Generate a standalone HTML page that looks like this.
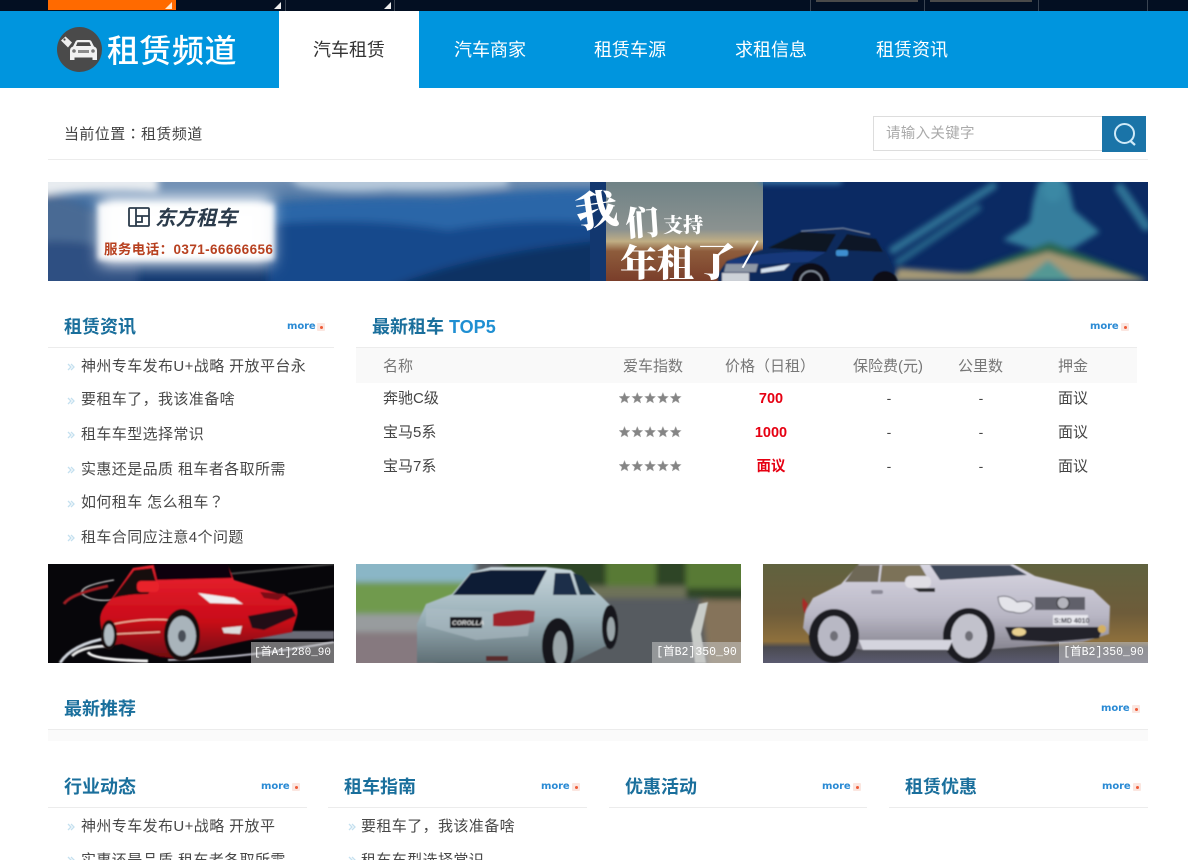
<!DOCTYPE html>
<html lang="zh-CN">
<head>
<meta charset="utf-8">
<title>租赁频道</title>
<style>
*{margin:0;padding:0;box-sizing:border-box}
html,body{width:1188px;height:860px;overflow:hidden;background:#fff}
body{position:relative;font-family:"Liberation Sans","Noto Sans CJK SC",sans-serif;color:#444}
.a{position:absolute;white-space:nowrap}
.t{position:absolute;white-space:nowrap;line-height:20px;height:20px}
.nav{position:absolute;top:12px;height:77px;width:140px;line-height:77px;text-align:center;font-size:18px;color:#fff}
.h{position:absolute;white-space:nowrap;font-size:18px;font-weight:700;color:#1a6f9c;line-height:26px;height:26px}
.ln{position:absolute;height:1px;background:#ececec}
.li{position:absolute;white-space:nowrap;font-size:15px;line-height:20px;height:20px;color:#484848;letter-spacing:.4px}
.tc{font-family:"Noto Sans CJK TC",sans-serif;line-height:0}
.bu{position:absolute;width:8px;height:8px}
.more{position:absolute;width:39px;height:10px}
.more b{position:absolute;left:0;top:-2px;font:700 10px/14px "DejaVu Sans",sans-serif;color:#2a8ad4;letter-spacing:-.1px}
.more i{position:absolute;right:0;top:1px;width:8px;height:8px;background:#fbe6e0;border-radius:1px}
.more i:after{content:"";position:absolute;left:3px;top:3px;width:3px;height:3px;background:#ee5a36;border-radius:50%}
.th{position:absolute;top:357px;font-size:15px;line-height:20px;color:#777;white-space:nowrap}
.td{position:absolute;font-size:15px;line-height:20px;color:#444;white-space:nowrap}
.pr{position:absolute;width:80px;text-align:center;left:731px;font-size:14.5px;font-weight:700;line-height:20px;color:#e60012}
.c{position:absolute;width:40px;text-align:center;font-size:14px;line-height:20px;color:#444}
.pic{position:absolute;top:564px;height:99px;overflow:hidden}
.pic svg{display:block}
.tag{position:absolute;right:0;bottom:0;height:21px;background:rgba(200,200,200,.55);color:#fff;font:11px/22px "Liberation Mono","Noto Sans CJK SC",monospace;text-align:center;white-space:nowrap}
</style>
</head>
<body>
<div class="a" style="left:0;top:0;width:1188px;height:11px;background:#030f22"></div>
<div class="a" style="left:48px;top:0;width:128px;height:10px;background:#ff6a00"></div>
<svg class="a" style="left:0;top:0" width="1188" height="11">
<path d="M165 9 172 9 172 2Z" fill="#fde7d0"/><path d="M274 9 281 9 281 2Z" fill="#eee"/><path d="M384 9 391 9 391 2Z" fill="#eee"/>
<g fill="#3a4452"><rect x="285" y="0" width="1" height="11"/><rect x="394" y="0" width="1" height="11"/><rect x="810" y="0" width="1" height="11"/><rect x="924" y="0" width="1" height="11"/><rect x="1038" y="0" width="1" height="11"/><rect x="1147" y="0" width="1" height="11"/></g>
<rect x="816" y="0" width="102" height="2" fill="#4a4a4a"/><rect x="930" y="0" width="102" height="2" fill="#4a4a4a"/>
</svg>
<div class="a" style="left:0;top:11px;width:1188px;height:77px;background:#0095de"></div>
<svg class="a" style="left:56px;top:26px" width="48" height="48" viewBox="0 0 48 48">
<circle cx="23.500" cy="23.500" r="22.500" fill="#4a4a4a"/>
<path d="M17 20.500 19.500 15.500Q20.300 14 22 14H33Q34.700 14 35.500 15.500L38 20.500Q41 21.500 41 24.500V34H36.500V31.500H18.500V34H14V24.500Q14 21.500 17 20.500Z" fill="#f2f2f2"/>
<path d="M20 20 21.500 16.200H33.500L35 20Z" fill="#4a4a4a"/>
<rect x="22" y="24" width="11" height="3" fill="#8c8c8c"/><circle cx="18" cy="25" r="1.800" fill="#777"/><circle cx="37" cy="25" r="1.800" fill="#777"/>
<path d="M5 14.500 9.500 10.500 16 16.500 12 21.500Z" fill="#eee"/><circle cx="8.500" cy="13.500" r="1.100" fill="#4a4a4a"/>
</svg>
<div class="a" style="left:107px;top:27px;font-size:32px;line-height:48px;color:#fff;letter-spacing:.5px;font-weight:500">租赁频道</div>
<div class="a" style="left:279px;top:11px;width:140px;height:77px;background:#fff"></div>
<div class="nav" style="left:279px;color:#333">汽车租赁</div>
<div class="nav" style="left:420px">汽车商家</div>
<div class="nav" style="left:560px">租赁车源</div>
<div class="nav" style="left:701px">求租信息</div>
<div class="nav" style="left:842px">租赁资讯</div>

<div class="t" style="left:64px;top:125px;font-size:15px;color:#444;letter-spacing:.4px">当前位置<span class="tc" lang="zh-Hant">：</span>租赁频道</div>
<div class="ln" style="left:48px;top:159px;width:1100px"></div>
<div class="a" style="left:873px;top:116px;width:230px;height:35px;border:1px solid #ddd;background:#fff"></div>
<div class="t" style="left:886px;top:124px;font-size:14.500px;color:#aaa;letter-spacing:.3px">请输入关键字</div>
<div class="a" style="left:1102px;top:116px;width:44px;height:36px;background:#1a74a8"></div>
<svg class="a" style="left:1102px;top:116px" width="44" height="36"><circle cx="22.500" cy="17.500" r="9.500" fill="none" stroke="#cfeaf8" stroke-width="2"/><path d="M28 24.500 33 29" stroke="#cfeaf8" stroke-width="2.200" fill="none"/></svg>

<!-- banner -->
<svg class="a" style="left:48px;top:182px" width="1100" height="99" viewBox="0 0 1100 99">
<defs>
<linearGradient id="sky" x1="0" y1="0" x2="0" y2="1"><stop offset="0" stop-color="#6f8eb2"/><stop offset=".3" stop-color="#2e6099"/><stop offset="1" stop-color="#12386f"/></linearGradient>
<linearGradient id="ph" x1="0" y1="0" x2="0" y2="1"><stop offset="0" stop-color="#6f8286"/><stop offset=".48" stop-color="#8b9290"/><stop offset=".6" stop-color="#c0ae84"/><stop offset=".7" stop-color="#8e5c3c"/><stop offset="1" stop-color="#7a3e2a"/></linearGradient>
<filter id="b2" x="-20%" y="-40%" width="140%" height="180%"><feGaussianBlur stdDeviation="4"/></filter>
<filter id="b3" x="-20%" y="-40%" width="140%" height="180%"><feGaussianBlur stdDeviation="3"/></filter>
<filter id="b5" x="-40%" y="-60%" width="180%" height="220%"><feGaussianBlur stdDeviation="8"/></filter>
<filter id="b1"><feGaussianBlur stdDeviation=".7"/></filter>
<clipPath id="bc"><rect width="1100" height="99"/></clipPath>
</defs>
<g clip-path="url(#bc)">
<rect width="558" height="99" fill="url(#sky)"/>
<g filter="url(#b2)">
<path d="M240 -8H460V4Q400 10 340 8 290 12 250 4Z" fill="#b6c8da"/>
<path d="M200 24Q320 14 400 18 480 6 558 8V60H200Z" fill="#2a66a8"/>
<path d="M220 42Q320 34 400 48 480 34 558 42V110H220Z" fill="#174a8c"/>
<path d="M330 110Q420 70 558 58V110Z" fill="#0f3164"/>
<path d="M-10 10Q20 16 50 30V70H-10Z" fill="#4a6a94"/>
<path d="M-10 60Q50 55 90 80V110H-10Z" fill="#2f5082"/>
<path d="M-10 -8H110V10Q50 6 -10 14Z" fill="#e8ecf0"/>
</g>
<rect x="52" y="14" width="172" height="68" fill="#fff" filter="url(#b5)"/>
<rect x="50" y="22" width="176" height="56" fill="#fff" filter="url(#b3)" opacity=".92"/>
<g fill="none" stroke="#2b3b4b" stroke-width="1.800"><rect x="81" y="26" width="20" height="18" rx="1"/><path d="M88 26V44M88 34H101M94 34V40H88"/></g>
<text x="107" y="43" font-family="'Liberation Sans','Noto Sans CJK SC',sans-serif" font-size="20.500" font-weight="700" font-style="italic" fill="#2b3b4b">东方租车</text>
<text x="56" y="72" font-family="'Liberation Sans','Noto Sans CJK SC',sans-serif" font-size="13.500" font-weight="700" fill="#b7401f" letter-spacing=".4">服务电话：0371-66666656</text>
<rect x="542" width="16" height="99" fill="#12376f"/>
<rect x="558" width="157" height="99" fill="url(#ph)"/>
<rect x="715" width="385" height="99" fill="#0b2a63"/>
<g fill="none" stroke-linecap="round" filter="url(#b3)" opacity=".85">
<path d="M715 -2H790" stroke="#3c7cab" stroke-width="9"/>
<path d="M845 68 945 4" stroke="#357e9e" stroke-width="8"/>
<path d="M850 80 930 26" stroke="#2a6e90" stroke-width="7"/>
<path d="M1005 2V10" stroke="#4a9bb4" stroke-width="20"/>
<path d="M1072 6 1098 44" stroke="#357f9e" stroke-width="10"/>
</g>
<g filter="url(#b3)" opacity=".9">
<path d="M990 0H1020L1026 28 1052 50 1026 66 980 66 955 58 982 40 985 20Z" fill="#3a88a4"/>
<path d="M855 99V94L921 90 1002 60 1096 96V99Z" fill="#2f6f50"/>
<path d="M845 99 850 86 925 92 1000 70 1100 99Z" fill="#b7a678"/>
<path d="M1000 78 1026 99H974Z" fill="#5da59a"/>
</g>
<!-- suv -->
<g filter="url(#b1)">
<path d="M670 110V92L679 79 720 66 753 50 792 47 822 52 838 70 846 88V110Z" fill="#0f2a5c"/>
<path d="M720 66 753 50 788 52 778 70Z" fill="#0a1220"/>
<path d="M788 68 799 52 828 57 835 70Z" fill="#101828"/>
<path d="M753 49 795 46 822 52" fill="none" stroke="#8a95a5" stroke-width="1"/>
<path d="M679 79Q720 68 778 70L760 80 680 84Z" fill="#16387a"/>
<path d="M678 82H710L708 90 676 90Z" fill="#8e98a6"/>
<path d="M713 87 742 82 736 88 713 91Z" fill="#d6e2ee"/>
<rect x="674" y="91" width="27" height="9" fill="#cdd2d8"/>
<rect x="788" y="68" width="12" height="6" rx="2" fill="#3c8ed0"/>
<circle cx="763" cy="100" r="19" fill="#070d18"/><circle cx="763" cy="100" r="11" fill="none" stroke="#8e98a6" stroke-width="1.500"/>
<circle cx="837" cy="102" r="13" fill="#070d18"/>
</g>
<g font-family="'Noto Serif CJK SC','Noto Sans CJK SC',serif" fill="#fff" font-weight="900">
<text transform="translate(530,46) rotate(-8)" font-size="42">我</text>
<text transform="translate(578,54) rotate(-4)" font-size="34">们</text>
<text x="615" y="50" font-size="20">支持</text>
<text x="572" y="94" font-size="37">年租</text>
<text x="648" y="94" font-size="40">了</text>
<text x="694" y="80" font-size="30" transform="rotate(12 694 80)">/</text>
</g>
</g>
</svg>

<!-- left news -->
<div class="h" style="left:64px;top:314px">租赁资讯</div>
<div class="more" style="left:287px;top:322px;width:38px"><b>more</b><i></i></div>
<div class="ln" style="left:48px;top:347px;width:286px"></div>
<svg width="0" height="0" style="position:absolute"><defs><symbol id="bu" viewBox="0 0 8 8"><path d="M1 1 4 4 1 7M4 1 7 4 4 7" stroke="#c4e0ef" stroke-width="1.300" fill="none"/></symbol>
<symbol id="st" viewBox="0 0 64 12"><g id="s5"><path id="s1" d="M5.500 .5 7 4.200 11 4.500 8 7.100 9 11 5.500 8.900 2 11 3 7.100 0 4.500 4 4.200Z" fill="#858585" stroke="#b4b4b4" stroke-width=".5"/><use href="#s1" x="12.800"/><use href="#s1" x="25.600"/><use href="#s1" x="38.400"/><use href="#s1" x="51.200"/></g></symbol></defs></svg>
<svg class="bu" style="left:67px;top:363px"><use href="#bu"/></svg>
<svg class="bu" style="left:67px;top:397px"><use href="#bu"/></svg>
<svg class="bu" style="left:67px;top:431px"><use href="#bu"/></svg>
<svg class="bu" style="left:67px;top:466px"><use href="#bu"/></svg>
<svg class="bu" style="left:67px;top:500px"><use href="#bu"/></svg>
<svg class="bu" style="left:67px;top:534px"><use href="#bu"/></svg>
<div class="li" style="left:81px;top:357px">神州专车发布U+战略 开放平台永</div>
<div class="li" style="left:81px;top:390px">要租车了，我该准备啥</div>
<div class="li" style="left:81px;top:425px">租车车型选择常识</div>
<div class="li" style="left:81px;top:460px">实惠还是品质 租车者各取所需</div>
<div class="li" style="left:81px;top:493px">如何租车 怎么租车<span class="tc" lang="zh-Hant">？</span></div>
<div class="li" style="left:81px;top:528px">租车合同应注意4个问题</div>

<!-- table -->
<div class="h" style="left:372px;top:314px">最新租车 <span style="color:#1f8fd2">TOP5</span></div>
<div class="more" style="left:1090px;top:322px"><b>more</b><i></i></div>
<div class="ln" style="left:356px;top:347px;width:781px"></div>
<div class="a" style="left:356px;top:348px;width:781px;height:35px;background:#f9f9f9"></div>
<div class="th" style="left:383px">名称</div>
<div class="th" style="left:623px">爱车指数</div>
<div class="th" style="left:725px">价格（日租）</div>
<div class="th" style="left:853px">保险费(元)</div>
<div class="th" style="left:958px">公里数</div>
<div class="th" style="left:1058px">押金</div>
<div class="td" style="left:383px;top:389px">奔驰C级</div>
<div class="td" style="left:383px;top:423px">宝马5系</div>
<div class="td" style="left:383px;top:457px">宝马7系</div>
<svg class="a" style="left:619px;top:392px" width="64" height="12"><use href="#st"/></svg>
<svg class="a" style="left:619px;top:426px" width="64" height="12"><use href="#st"/></svg>
<svg class="a" style="left:619px;top:460px" width="64" height="12"><use href="#st"/></svg>
<div class="pr" style="top:389px">700</div>
<div class="pr" style="top:423px">1000</div>
<div class="pr" style="top:457px">面议</div>
<div class="c" style="left:869px;top:388px">-</div><div class="c" style="left:961px;top:388px">-</div>
<div class="c" style="left:869px;top:422px">-</div><div class="c" style="left:961px;top:422px">-</div>
<div class="c" style="left:869px;top:456px">-</div><div class="c" style="left:961px;top:456px">-</div>
<div class="td" style="left:1058px;top:389px">面议</div>
<div class="td" style="left:1058px;top:423px">面议</div>
<div class="td" style="left:1058px;top:457px">面议</div>

<!-- pictures -->
<div class="pic" style="left:48px;width:286px">
<svg width="286" height="99" viewBox="0 0 286 99">
<defs>
<linearGradient id="rb" x1="0" y1="0" x2="0" y2="1"><stop offset="0" stop-color="#ec2430"/><stop offset=".6" stop-color="#c80a18"/><stop offset="1" stop-color="#6c0610"/></linearGradient>
<filter id="p1"><feGaussianBlur stdDeviation=".7"/></filter>
</defs>
<rect width="286" height="99" fill="#07060a"/>
<g fill="none" filter="url(#p1)">
<path d="M66 16Q30 22 34 30 44 38 64 36" stroke="#c8c8c8" stroke-width="1.300"/>
<path d="M60 22Q22 30 16 40" stroke="#a01c24" stroke-width="3"/>
<path d="M180 10 286 0" stroke="#444" stroke-width="2"/>
<path d="M240 30 286 22" stroke="#333" stroke-width="2"/>
<path d="M12 99Q24 80 60 74" stroke="#cfd4dc" stroke-width="3"/>
<path d="M24 92Q34 82 62 82" stroke="#e6e6e6" stroke-width="3"/>
<path d="M40 88Q44 96 100 97" stroke="#f4f4f4" stroke-width="3"/>
<path d="M120 96Q200 94 286 78" stroke="#b8b8c4" stroke-width="2"/>
<path d="M205 71H286" stroke="#6a6a76" stroke-width="8"/>
</g>
<g filter="url(#p1)">
<path d="M52 55Q52 45 64 34L85 4 105 1H180L186 16 238 32Q252 40 249 52L244 68Q200 76 175 82L130 95 112 93 74 80 62 82Q52 70 52 55Z" fill="url(#rb)"/>
<path d="M65 34 86 6 104 4 108 18 100 30Q80 30 65 34Z" fill="#15080c"/>
<path d="M105 0H180L184 14 109 16Z" fill="#07060a"/>
<rect x="89" y="17" width="22" height="11" rx="4" fill="#e8202a"/>
<path d="M150 29 186 34 195 40 162 39Z" fill="#f0eef0"/>
<path d="M212 28 238 30 230 36 216 34Z" fill="#7a0a12"/>
<path d="M200 52 244 44 248 52 216 66 204 64Z" fill="#241016"/>
<path d="M174 64 194 62 192 70 176 69Z" fill="#dcdcdc"/>
<path d="M66 60Q96 54 122 56M68 70 112 68" stroke="#f2c0a8" stroke-width="1.200" fill="none"/>
<ellipse cx="134" cy="71" rx="18" ry="26" fill="#150a0c"/>
<ellipse cx="134" cy="72" rx="14" ry="20" fill="#a9b4bb"/>
<ellipse cx="134" cy="72" rx="4" ry="6" fill="#4a5058"/>
<ellipse cx="61" cy="71" rx="8" ry="15" fill="#150a0c"/>
<ellipse cx="61" cy="71" rx="5" ry="11" fill="#b0bac0"/>
</g>
</svg>
<div class="tag" style="width:83px">[首A1]280_90</div>
</div>

<div class="pic" style="left:356px;width:385px">
<svg width="385" height="99" viewBox="0 0 385 99">
<defs>
<linearGradient id="sb" x1="0" y1="0" x2="0" y2="1"><stop offset="0" stop-color="#c8d6dc"/><stop offset=".5" stop-color="#9cb2ba"/><stop offset="1" stop-color="#5e6e74"/></linearGradient>
<filter id="p2" x="-20%" y="-40%" width="140%" height="180%"><feGaussianBlur stdDeviation="3"/></filter>
<filter id="p3"><feGaussianBlur stdDeviation=".7"/></filter>
</defs>
<rect width="385" height="99" fill="#565b60"/>
<g filter="url(#p2)">
<rect x="-10" y="-10" width="130" height="30" fill="#8ab6c6"/>
<rect x="-10" y="18" width="130" height="32" fill="#6f9a4e"/>
<rect x="-10" y="50" width="90" height="20" fill="#989c9e"/>
<rect x="-10" y="68" width="90" height="40" fill="#86797f"/>
<path d="M140 -10H395V40L340 34 240 34 170 30Z" fill="#2e4526"/>
<path d="M250 -5H300V22H250ZM330 -5H395V24H330Z" fill="#587a36"/>
<path d="M230 22H330V34H230Z" fill="#6e7258"/>
<path d="M345 36H395V105H352Z" fill="#85735a"/>
</g>
<path d="M343 40 352 38 345 70 350 99H339L335 66Z" fill="#c8ccc8" filter="url(#p3)"/>
<g filter="url(#p3)">
<path d="M61 60 70 40 96 30 115 8 135 3H190L215 6 245 32 258 45 262 65 250 82 215 99H61Z" fill="url(#sb)"/>
<path d="M97 31 115 9 135 6H191L178 31Z" fill="#0a1a36"/>
<path d="M199 9 214 9 221 31 197 31Z" fill="#1a2e48"/><path d="M217 9 226 12 240 31 224 31Z" fill="#1c3044"/>
<path d="M70 44 175 50 172 72 120 76 70 62Z" fill="#adbdc4" opacity=".6"/>
<rect x="94" y="53" width="32" height="11" fill="#14181c"/>
<text x="96" y="61" font-size="6.500" font-weight="700" fill="#ddd" font-style="italic" font-family="Liberation Sans,sans-serif">COROLLA</text>
<path d="M137 50Q160 44 179 47L178 58Q160 64 137 62Z" fill="#a0202c"/>
<ellipse cx="202" cy="82" rx="16" ry="28" fill="#15181c"/><ellipse cx="204" cy="84" rx="7" ry="17" fill="#99a4a8"/>
<ellipse cx="254" cy="63" rx="8" ry="22" fill="#15181c"/><ellipse cx="255" cy="65" rx="4" ry="12" fill="#99a4a8"/>
<rect x="130" y="92" width="22" height="5" fill="#5a2a2a"/>
</g>
</svg>
<div class="tag" style="width:89px;font-size:11.500px">[首B2]350_90</div>
</div>

<div class="pic" style="left:763px;width:385px">
<svg width="385" height="99" viewBox="0 0 385 99">
<defs>
<linearGradient id="mb" x1="0" y1="0" x2="0" y2="1"><stop offset="0" stop-color="#60623f"/><stop offset=".5" stop-color="#6e5c3a"/><stop offset=".78" stop-color="#8e703c"/><stop offset=".84" stop-color="#4a4a50"/><stop offset="1" stop-color="#5a5a70"/></linearGradient>
<linearGradient id="ms" x1="0" y1="0" x2="0" y2="1"><stop offset="0" stop-color="#d8d6e2"/><stop offset=".6" stop-color="#b8b6c4"/><stop offset="1" stop-color="#86848f"/></linearGradient>
</defs>
<rect width="385" height="99" fill="url(#mb)"/>
<g filter="url(#p3)">
<path d="M42 48 50 34 78 20 96 0H250L272 12 330 26 347 42 346 70 320 78 220 86H100L50 76 40 64Z" fill="url(#ms)"/>
<path d="M82 18 94 1H117L115 18Z" fill="#6e6856"/>
<path d="M117 18 119 1H157L164 13 150 18Z" fill="#7c7258"/>
<path d="M167 1H247L264 11 177 16Z" fill="#3e4658"/>
<rect x="142" y="12" width="26" height="12" rx="5" fill="#e0dee4"/>
<path d="M150 24H172V28H156Z" fill="#2a2a2e"/>
<rect x="108" y="26" width="12" height="4" rx="2" fill="#8a8896"/>
<path d="M235 33Q246 30 254 38 268 35 270 42 262 52 250 48 236 48 235 33Z" fill="#e4e4ea" stroke="#6a6a74"/>
<path d="M272 33H322V46H272Z" fill="#60606a"/>
<circle cx="300" cy="39" r="6" fill="#b4b4bc" stroke="#222"/>
<rect x="290" y="51" width="35" height="10" fill="#e8e8ee"/>
<text x="291" y="59" font-size="7" font-weight="700" fill="#223" font-family="Liberation Sans,sans-serif">S:MD 4010</text>
<path d="M242 63H340L336 74 290 78 248 76Z" fill="#22222a"/>
<ellipse cx="256" cy="68" rx="7" ry="4" fill="#e8d090"/><ellipse cx="339" cy="65" rx="4" ry="4" fill="#d4b060"/>
<path d="M45 40 40 34Q38 42 42 50Z" fill="#a82a28"/>
<ellipse cx="71" cy="72" rx="25" ry="27" fill="#1a1a20"/><ellipse cx="71" cy="72" rx="16" ry="20" fill="#b8b8c4"/><ellipse cx="71" cy="72" rx="4" ry="5" fill="#707078"/>
<ellipse cx="206" cy="72" rx="26" ry="28" fill="#1a1a20"/><ellipse cx="206" cy="72" rx="18" ry="22" fill="#c2c2cc"/><ellipse cx="206" cy="72" rx="4" ry="5" fill="#707078"/>
<path d="M96 76H190L185 86H100Z" fill="#d4d4de"/>
</g>
</svg>
<div class="tag" style="width:89px;font-size:11.500px">[首B2]350_90</div>
</div>

<!-- recommended -->
<div class="h" style="left:64px;top:696px">最新推荐</div>
<div class="more" style="left:1101px;top:704px"><b>more</b><i></i></div>
<div class="ln" style="left:48px;top:729px;width:1100px"></div>
<div class="a" style="left:48px;top:730px;width:1100px;height:11px;background:#fafafa"></div>

<div class="h" style="left:64px;top:774px">行业动态</div>
<div class="h" style="left:344px;top:774px">租车指南</div>
<div class="h" style="left:625px;top:774px">优惠活动</div>
<div class="h" style="left:905px;top:774px">租赁优惠</div>
<div class="more" style="left:261px;top:782px"><b>more</b><i></i></div>
<div class="more" style="left:541px;top:782px"><b>more</b><i></i></div>
<div class="more" style="left:822px;top:782px"><b>more</b><i></i></div>
<div class="more" style="left:1102px;top:782px"><b>more</b><i></i></div>
<div class="ln" style="left:48px;top:807px;width:259px"></div>
<div class="ln" style="left:328px;top:807px;width:259px"></div>
<div class="ln" style="left:609px;top:807px;width:258px"></div>
<div class="ln" style="left:889px;top:807px;width:259px"></div>
<svg class="bu" style="left:67px;top:823px"><use href="#bu"/></svg>
<svg class="bu" style="left:348px;top:823px"><use href="#bu"/></svg>
<svg class="bu" style="left:67px;top:856px"><use href="#bu"/></svg>
<svg class="bu" style="left:348px;top:856px"><use href="#bu"/></svg>
<div class="li" style="left:81px;top:817px">神州专车发布U+战略 开放平</div>
<div class="li" style="left:361px;top:817px">要租车了，我该准备啥</div>
<div class="li" style="left:81px;top:851px">实惠还是品质 租车者各取所需</div>
<div class="li" style="left:361px;top:851px">租车车型选择常识</div>
</body>
</html>
